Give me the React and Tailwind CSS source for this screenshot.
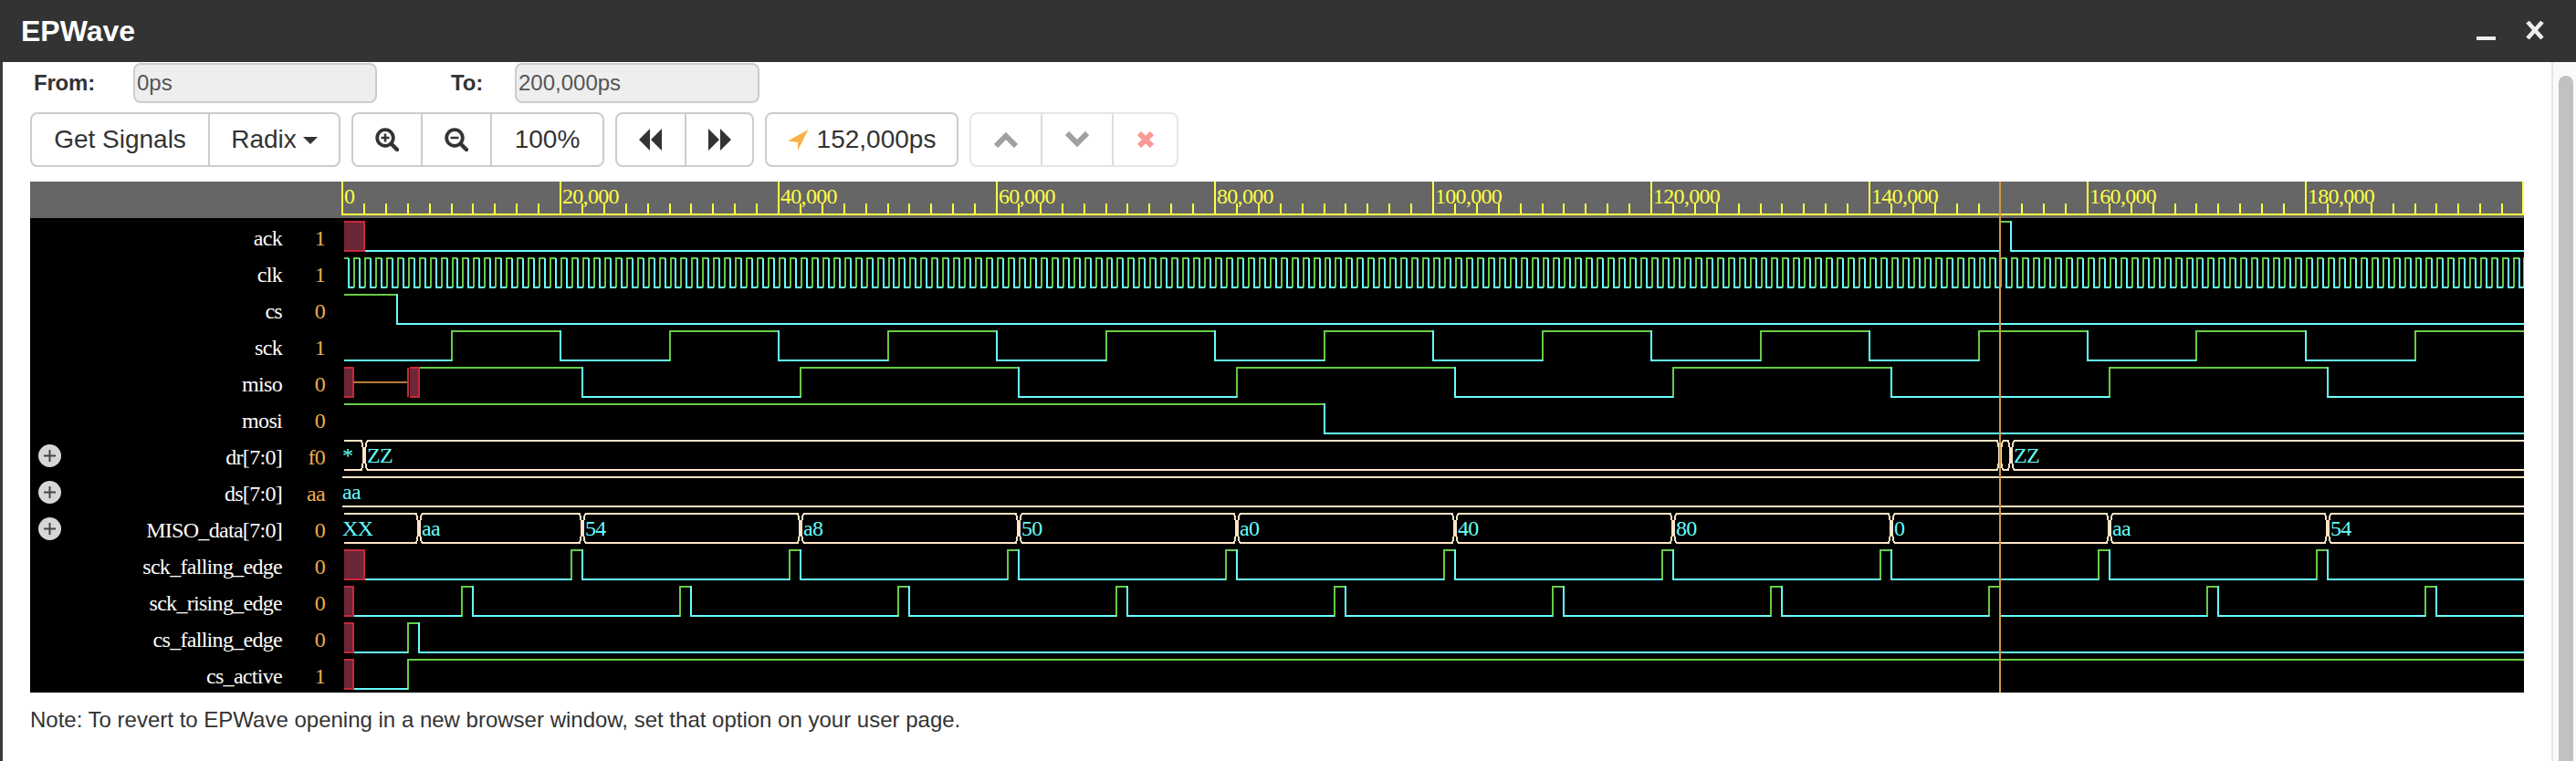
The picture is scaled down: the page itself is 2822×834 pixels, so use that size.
import React from "react";

const SY = 199;
const W = 2391;
const H = 560;
const X = (t) => Math.round(1 + t * 11.95);
const CY = "#66ffff";
const GR = "#66cc44";
const BQ = "#ffe4c4";
const RD = "#c8283c";
const RF = "#6b2737";
const high = (i) => 243 + 40 * i - SY;
const low = (i) => 275 + 40 * i - SY;

const rows = [
  ["ack", "1"],
  ["clk", "1"],
  ["cs", "0"],
  ["sck", "1"],
  ["miso", "0"],
  ["mosi", "0"],
  ["dr[7:0]", "f0", true],
  ["ds[7:0]", "aa", true],
  ["MISO_data[7:0]", "0", true],
  ["sck_falling_edge", "0"],
  ["sck_rising_edge", "0"],
  ["cs_falling_edge", "0"],
  ["cs_active", "1"],
];

function Digital({ i, start, init, edges, end = 200 }) {
  const hi = high(i);
  const lo = low(i);
  let g = "";
  let c = "";
  let v = init;
  let prev = start;
  const sx = (t) => (t === 0 ? 3 : X(t));
  [...edges, end].forEach((t, idx) => {
    const a = sx(prev);
    const b = t === 200 ? W : X(t);
    if (v) g += `M${a} ${hi}H${b}`;
    else c += `M${a} ${lo}H${b}`;
    if (idx < edges.length) {
      if (v) c += `M${b} ${hi - 1}V${lo + 1}`;
      else g += `M${b} ${lo + 1}V${hi - 1}`;
    }
    v = !v;
    prev = t;
  });
  return (
    <g fill="none" strokeWidth="2">
      <path d={g} stroke={GR} />
      <path d={c} stroke={CY} />
    </g>
  );
}

function RedBox({ i, a, b }) {
  const hi = high(i);
  const lo = low(i);
  return (
    <g>
      <rect x={a} y={hi - 1} width={b - a} height={lo - hi + 2} fill={RF} />
      <path d={`M${a} ${hi}H${b}M${a} ${lo}H${b}M${b - 1} ${hi}V${lo}`} stroke={RD} strokeWidth="2" fill="none" />
    </g>
  );
}

function Bus({ i, edges, labels }) {
  const hi = high(i);
  const lo = low(i);
  let d = "";
  let prev = X(0) + 2;
  edges.forEach((t) => {
    const x = X(t);
    d += `M${prev} ${hi}H${x - 3}L${x - 1} ${hi + 9}V${lo - 9}L${x - 3} ${lo}H${prev}`;
    d += `M${x + 3} ${hi}L${x + 1} ${hi + 9}V${lo - 9}L${x + 3} ${lo}`;
    prev = x + 3;
  });
  d += `M${prev} ${hi}H${W}M${prev} ${lo}H${W}`;
  return (
    <g>
      <path d={d} fill="none" stroke={BQ} strokeWidth="2" />
      {labels.map(([x, s]) => (
        <text key={x} x={x} y={hi + 24} fill={CY}>
          {s}
        </text>
      ))}
    </g>
  );
}

function Pulses({ i, first, count, box }) {
  const edges = [];
  for (let n = 0; n < count; n++) {
    edges.push(first + 20 * n, first + 1 + 20 * n);
  }
  return (
    <>
      <Digital i={i} start={box} init={false} edges={edges} />
      <RedBox i={i} a={3} b={X(box) + 1} />
    </>
  );
}

function Chart() {
  const ticks = [];
  for (let t = 0; t <= 200; t += 2) {
    const major = t % 20 === 0;
    const x = t === 200 ? W - 1 : X(t);
    ticks.push(<path key={t} d={`M${x} ${major ? 0 : 24}V36`} stroke="#ffff44" strokeWidth="2" />);
  }
  const labels = [];
  for (let t = 0; t < 200; t += 20) {
    labels.push(
      <text key={t} x={X(t) + 2} y={24} fill="#ffff44">
        {t === 0 ? "0" : `${t},000`}
      </text>
    );
  }
  const clkG = [];
  const clkC = [];
  for (let n = 0; n < 200; n++) {
    const a = n === 0 ? 3 : X(n) + 1;
    const m = X(n + 0.5) + 1;
    const e = Math.min(X(n + 1) + 1, W);
    clkG.push(`M${a} ${high(1)}H${m}`);
    clkC.push(`M${m} ${high(1)}V${low(1) + 1}M${m} ${low(1)}H${e}`);
    clkG.push(`M${e} ${low(1)}V${high(1) - 1}`);
  }
  const sckEdges = [];
  for (let t = 10; t < 200; t += 10) sckEdges.push(t);
  const misoEdges = [22];
  for (let t = 42; t < 200; t += 20) misoEdges.push(t);
  const misoE = [7, 22, 42, 62, 82, 102, 122, 142, 162, 182];
  const misoL = ["aa", "54", "a8", "50", "a0", "40", "80", "0", "aa", "54"];

  return (
    <svg
      width={W}
      height={H}
      viewBox={`0 0 ${W} ${H}`}
      className="block shrink-0 font-['Liberation_Serif',serif] tracking-[-0.7px]"
      fontSize="24"
      shapeRendering="crispEdges"
    >
      <rect x="0" y="0" width={W} height="40" fill="#666666" />
      <rect x="0" y="40" width={W} height="520" fill="#000000" />
      {labels}
      {ticks}
      <path d={`M0 36H${W}`} stroke="#ffff44" strokeWidth="2" />

      <Digital i={0} start={2} init={false} edges={[152, 153]} />
      <RedBox i={0} a={3} b={X(2) + 1} />
      <g fill="none" strokeWidth="2">
        <path d={clkG.join("")} stroke={GR} />
        <path d={clkC.join("")} stroke={CY} />
      </g>
      <Digital i={2} start={0} init={true} edges={[5]} />
      <Digital i={3} start={0} init={false} edges={sckEdges} />
      <Digital i={4} start={7} init={true} edges={misoEdges} />
      <RedBox i={4} a={3} b={X(1) + 1} />
      <path d={`M${X(1)} ${high(4) + 16}H${X(6)}`} stroke="#b87a3c" strokeWidth="2" />
      <path d={`M${X(6)} ${high(4)}V${low(4)}`} stroke={RD} strokeWidth="2" />
      <RedBox i={4} a={X(6) + 2} b={X(7) + 1} />
      <Digital i={5} start={0} init={true} edges={[90]} />

      <Bus
        i={6}
        edges={[2, 152, 153]}
        labels={[
          [1, "*"],
          [X(2) + 3, "ZZ"],
          [X(153) + 3, "ZZ"],
        ]}
      />
      <g>
        <path d={`M1 ${high(7)}H${W}M1 ${low(7)}H${W}`} stroke={BQ} strokeWidth="2" />
        <text x="1" y={high(7) + 24} fill={CY}>
          aa
        </text>
      </g>
      <Bus
        i={8}
        edges={misoE}
        labels={[[1, "XX"], ...misoE.map((t, k) => [X(t) + 3, misoL[k]])]}
      />
      <Pulses i={9} first={21} count={9} box={2} />
      <Pulses i={10} first={11} count={10} box={1} />
      <Digital i={11} start={1} init={false} edges={[6, 7]} />
      <RedBox i={11} a={3} b={X(1) + 1} />
      <Digital i={12} start={1} init={false} edges={[6]} />
      <RedBox i={12} a={3} b={X(1) + 1} />

      <path d={`M${X(152)} 0V${H}`} stroke="#cf9a45" strokeWidth="2" />
    </svg>
  );
}

function ZoomIcon({ minus }) {
  return (
    <svg width="26" height="26" viewBox="0 0 26 26" fill="none" stroke="#333333">
      <circle cx="11" cy="11" r="8.8" strokeWidth="3.8" />
      <path d={minus ? "M6.5 11H15.5" : "M6.5 11H15.5M11 6.5V15.5"} strokeWidth="2.6" />
      <path d="M17.5 17.5L24 24" strokeWidth="4.4" strokeLinecap="round" />
    </svg>
  );
}

function Arrows({ dir }) {
  return (
    <svg width="26" height="24" viewBox="0 0 26 24" fill="#333333" className={dir === "right" ? "rotate-180" : ""}>
      <path d="M12 0V24L0 12ZM25 0V24L13 12Z" />
    </svg>
  );
}

const Cell = ({ className = "", children }) => (
  <div className={`flex h-full items-center justify-center ${className}`}>{children}</div>
);

const groupCls = "flex h-[60px] shrink-0 rounded-lg border-2 border-[#cccccc] bg-white overflow-hidden";

export default function App() {
  return (
    <div className="flex h-[834px] w-[2822px] flex-col overflow-hidden bg-white font-['Liberation_Sans',Arial,sans-serif] text-[#333333]">
      <header className="flex h-[68px] shrink-0 items-center justify-between bg-[#333333] pl-[23px] pr-[35px]">
        <h1 className="text-[32px] font-bold leading-none text-white">EPWave</h1>
        <div className="flex items-start gap-[33px] pt-[1px]">
          <svg width="21" height="22" viewBox="0 0 21 22" className="mt-[-1px]">
            <rect x="0" y="17" width="21" height="4" fill="#eeeeee" />
          </svg>
          <svg width="20" height="20" viewBox="0 0 20 20" className="mt-[-1px]" stroke="#eeeeee" strokeWidth="4.5">
            <path d="M2 1L18 19M18 1L2 19" />
          </svg>
        </div>
      </header>

      <div className="flex min-h-0 flex-1">
        <div className="w-[3px] shrink-0 bg-[#3a3a3a]" />
        <main className="w-[2792px] shrink-0 pl-[30px]">
          <div className="mt-px flex h-[44px] items-center text-[24px]">
            <label className="w-[113px] pl-[4px] font-bold tracking-[-0.2px]">From:</label>
            <div className="flex h-full w-[267px] items-center rounded-lg border-2 border-[#cccccc] bg-[#eeeeee] pl-[2px] text-[#555555]">
              0ps
            </div>
            <label className="ml-[81px] w-[70px] font-bold tracking-[-0.2px]">To:</label>
            <div className="flex h-full w-[268px] items-center rounded-lg border-2 border-[#cccccc] bg-[#eeeeee] pl-[2px] text-[#555555]">
              200,000ps
            </div>
          </div>

          <div className="mt-[10px] flex gap-[12px] text-[28px]">
            <div className={`${groupCls} w-[340px]`}>
              <Cell className="w-[193px]">Get Signals</Cell>
              <Cell className="flex-1 gap-[7px] border-l-2 border-[#cccccc]">
                Radix
                <span className="mt-[2px] h-0 w-0 border-x-[8px] border-t-[8px] border-x-transparent border-t-[#333333]" />
              </Cell>
            </div>
            <div className={`${groupCls} w-[277px]`}>
              <Cell className="w-[74px]"><ZoomIcon /></Cell>
              <Cell className="w-[76px] border-l-2 border-[#cccccc]"><ZoomIcon minus /></Cell>
              <Cell className="flex-1 border-l-2 border-[#cccccc]">100%</Cell>
            </div>
            <div className={`${groupCls} w-[152px]`}>
              <Cell className="w-[74px]"><Arrows /></Cell>
              <Cell className="flex-1 border-l-2 border-[#cccccc]"><Arrows dir="right" /></Cell>
            </div>
            <div className={`${groupCls} w-[212px] items-center justify-center gap-[9px]`}>
              <svg width="23" height="23" viewBox="0 0 23 23" fill="#f8b24a">
                <path d="M22.5 0L0 12.5L11 14L11 23Z" />
              </svg>
              152,000ps
            </div>
            <div className="flex h-[60px] w-[229px] shrink-0 overflow-hidden rounded-lg border-2 border-[#e6e6e6] bg-white">
              <Cell className="w-[76px]">
                <svg width="26" height="18" viewBox="0 0 26 18" fill="none" stroke="#a0a0a0" strokeWidth="6">
                  <path d="M2 16L13 5L24 16" />
                </svg>
              </Cell>
              <Cell className="w-[78px] border-l-2 border-[#dddddd]">
                <svg width="26" height="18" viewBox="0 0 26 18" fill="none" stroke="#a0a0a0" strokeWidth="6">
                  <path d="M2 2L13 13L24 2" />
                </svg>
              </Cell>
              <Cell className="flex-1 border-l-2 border-[#dddddd]">
                <svg width="18" height="18" viewBox="0 0 18 18" fill="none" stroke="#fb9a94" strokeWidth="6">
                  <path d="M2 2L16 16M16 2L2 16" />
                </svg>
              </Cell>
            </div>
          </div>

          <section className="mt-[16px] flex w-[2732px]">
            <div className="w-[341px] shrink-0 bg-black font-['Liberation_Serif',serif] text-[24px] tracking-[-0.7px]">
              <div className="h-10 bg-[#666666]" />
              {rows.map(([name, val, plus]) => (
                <div key={name} className="flex h-10 items-center">
                  <div className="flex w-[42px] shrink-0 justify-center">
                    {plus && (
                      <span className="flex h-[25px] w-[25px] items-center justify-center rounded-full bg-[#d6d6d6]">
                        <svg width="15" height="15" viewBox="0 0 15 15" stroke="#444444" strokeWidth="2">
                          <path d="M1 7.5H14M7.5 1V14" />
                        </svg>
                      </span>
                    )}
                  </div>
                  <span className="flex-1 pt-[4px] text-right leading-[36px] text-white">{name}</span>
                  <span className="w-[65px] shrink-0 pr-[18px] pt-[4px] text-right leading-[36px] text-[#f0ad4e]">{val}</span>
                </div>
              ))}
            </div>
            <Chart />
          </section>

          <p className="mt-[17px] text-[24px] leading-[26px] text-[#333333]">
            Note: To revert to EPWave opening in a new browser window, set that option on your user page.
          </p>
        </main>
        <aside className="relative flex-1 border-l-2 border-[#e5e5e5] bg-[#fafafa]">
          <div className="absolute bottom-0 left-[6px] top-[15px] w-[16px] rounded-t-full bg-[#c1c1c1]" />
        </aside>
      </div>
    </div>
  );
}
